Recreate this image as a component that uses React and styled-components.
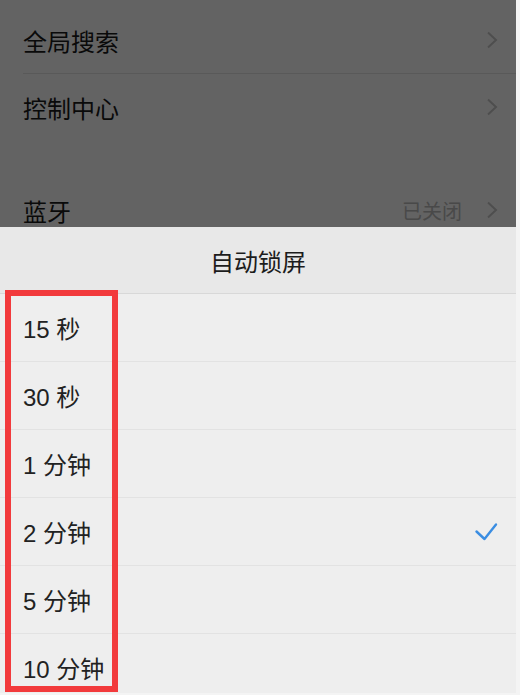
import React from 'react';
import styled, { createGlobalStyle } from 'styled-components';

const Global = createGlobalStyle`
  html, body {
    margin: 0;
    padding: 0;
    background: #f4f4f4;
  }
  body {
    font-family: "Liberation Sans", "Noto Sans CJK SC", sans-serif;
  }
`;

const Screen = styled.div`
  position: relative;
  width: 516px;
  height: 693px;
  overflow: hidden;
  background: #ffffff;
`;

const Settings = styled.div`
  padding-top: 7px;
`;

const Group = styled.div`
  margin-bottom: ${p => p.gap || 0}px;
`;

const SettingRow = styled.div`
  display: flex;
  align-items: center;
  height: 66px;
  margin-left: 23px;
  padding-right: 18px;
  border-bottom: ${p => (p.last ? 'none' : '1px solid #e6e6e6')};
`;

const SettingLabel = styled.span`
  flex: 1;
  font-size: 24px;
  color: #1a1a1a;
`;

const SettingValue = styled.span`
  font-size: 20px;
  color: #bcbcbc;
  margin-right: 24px;
`;

const Dim = styled.div`
  position: absolute;
  inset: 0;
  background: rgba(0, 0, 0, 0.61);
`;

const Sheet = styled.div`
  position: absolute;
  left: 0;
  right: 0;
  bottom: 0;
  height: 466px;
  background: #eeeeee;
  display: flex;
  flex-direction: column;
`;

const SheetTitle = styled.div`
  height: 66px;
  flex-shrink: 0;
  display: flex;
  align-items: center;
  justify-content: center;
  background: #e8e8e8;
  border-bottom: 1px solid #d8d8d8;
  font-size: 24px;
  color: #1c1c1c;
`;

const Option = styled.div`
  display: flex;
  align-items: center;
  height: 67px;
  flex-shrink: 0;
  padding: 0 18px 0 23px;
  border-bottom: 1px solid #e2e2e2;
`;

const OptionLabel = styled.span`
  flex: 1;
  font-size: 24px;
  color: #222222;
`;

const Highlight = styled.div`
  position: absolute;
  left: 5px;
  top: 290px;
  width: 113px;
  height: 402px;
  box-sizing: border-box;
  border: 6px solid #f23a3c;
`;

const Chevron = () => (
  <svg width="12" height="18" viewBox="0 0 12 18">
    <polyline points="2,1.5 10,9 2,16.5" fill="none" stroke="#c8c8c8" strokeWidth="2" />
  </svg>
);

const Check = () => (
  <svg width="24" height="20" viewBox="0 0 24 20">
    <polyline
      points="2.5,9.5 10.5,17 22,2.5"
      fill="none"
      stroke="#3a8de2"
      strokeWidth="2.4"
      strokeLinecap="round"
      strokeLinejoin="round"
    />
  </svg>
);

const options = ['15 秒', '30 秒', '1 分钟', '2 分钟', '5 分钟', '10 分钟'];

export default function App() {
  return (
    <Screen>
      <Global />
      <Settings>
        <Group gap={37}>
          <SettingRow>
            <SettingLabel>全局搜索</SettingLabel>
            <Chevron />
          </SettingRow>
          <SettingRow last>
            <SettingLabel>控制中心</SettingLabel>
            <Chevron />
          </SettingRow>
        </Group>
        <Group>
          <SettingRow>
            <SettingLabel>蓝牙</SettingLabel>
            <SettingValue>已关闭</SettingValue>
            <Chevron />
          </SettingRow>
          <SettingRow>
            <SettingLabel>WLAN</SettingLabel>
            <Chevron />
          </SettingRow>
        </Group>
      </Settings>
      <Dim />
      <Sheet>
        <SheetTitle>自动锁屏</SheetTitle>
        {options.map(o => (
          <Option key={o}>
            <OptionLabel>{o}</OptionLabel>
            {o === '2 分钟' && <Check />}
          </Option>
        ))}
      </Sheet>
      <Highlight />
    </Screen>
  );
}
